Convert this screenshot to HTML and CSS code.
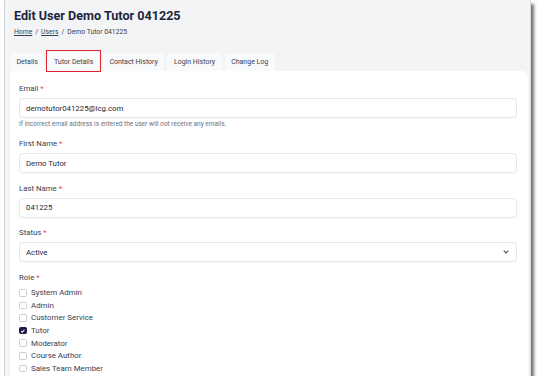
FILE: index.html
```html
<!DOCTYPE html>
<html>
<head>
<meta charset="utf-8">
<link rel="stylesheet" href="styles.css">
</head>
<body>
<div class="frame">
  <h1 class="title">Edit User Demo Tutor 041225</h1>
  <nav class="crumbs"><a href="#">Home</a><span class="sep">/</span><a href="#">Users</a><span class="sep">/</span><span>Demo Tutor 041225</span></nav>
  <div class="tabs">
    <div class="tab">Details</div>
    <div class="tab tab-hl">Tutor Details</div>
    <div class="tab">Contact History</div>
    <div class="tab">Login History</div>
    <div class="tab">Change Log</div>
  </div>
  <div class="card">
    <div class="field field-help">
      <div class="label">Email <span class="req">*</span></div>
      <div class="input">demotutor041225@lcg.com</div>
      <div class="help">If incorrect email address is entered the user will not receive any emails.</div>
    </div>
    <div class="field">
      <div class="label">First Name <span class="req">*</span></div>
      <div class="input">Demo Tutor</div>
    </div>
    <div class="field">
      <div class="label">Last Name <span class="req">*</span></div>
      <div class="input">041225</div>
    </div>
    <div class="field">
      <div class="label">Status <span class="req">*</span></div>
      <div class="input select"><span>Active</span>
        <svg class="chev" width="6" height="4" viewBox="0 0 6 4"><path d="M0.7 0.7 L3 3 L5.3 0.7" fill="none" stroke="#4b5563" stroke-width="1.1"/></svg>
      </div>
    </div>
    <div class="field">
      <div class="label">Role <span class="req">*</span></div>
      <div class="checks">
        <div class="check"><span class="cb"></span>System Admin</div>
        <div class="check"><span class="cb"></span>Admin</div>
        <div class="check"><span class="cb"></span>Customer Service</div>
        <div class="check"><span class="cb cb-on"><svg width="6" height="6" viewBox="0 0 6 6"><path d="M1.2 3.1 L2.5 4.3 L4.8 1.6" fill="none" stroke="#fff" stroke-width="1.1"/></svg></span>Tutor</div>
        <div class="check"><span class="cb"></span>Moderator</div>
        <div class="check"><span class="cb"></span>Course Author</div>
        <div class="check"><span class="cb"></span>Sales Team Member</div>
      </div>
    </div>
  </div>
</div>
</body>
</html>
```
FILE: styles.css
```css
html, body {
  margin: 0;
  padding: 0;
  background: #ffffff;
}
body {
  font-family: Roboto, "Liberation Sans", sans-serif;
}
.frame {
  margin-left: 4px;
  width: 527px;
  height: 376px;
  box-sizing: border-box;
  border-left: 1px solid #cfd1d4;
  border-right: 1px solid #d6d7d9;
  background: #f3f4f6;
  box-shadow: 3px 4px 3px rgba(0, 0, 0, 0.55);
  overflow: hidden;
  padding: 8px 2px 0 5px;
}
.title {
  margin: 0 0 0 4px;
  font-size: 12.6px;
  line-height: 16px;
  font-weight: 700;
  color: #1b2540;
}
.crumbs {
  margin: 4px 0 0 4px;
  font-size: 6.8px;
  line-height: 9px;
  color: #374151;
}
.crumbs a {
  color: #374151;
  text-decoration: underline;
}
.crumbs .sep {
  margin: 0 3px;
}
.tabs {
  display: flex;
  gap: 3px;
  margin-top: 16px;
}
.tab {
  position: relative;
  height: 18px;
  padding: 0 6.5px;
  display: flex;
  align-items: center;
  font-size: 7px;
  color: #374151;
  background: #f9fafb;
  border-radius: 4px 4px 0 0;
}
.tab-hl::after {
  content: "";
  position: absolute;
  top: -3px;
  bottom: -1px;
  left: -1.5px;
  right: -1.5px;
  border: 1.5px solid #e0242f;
}
.card {
  background: #ffffff;
  border-radius: 0 6px 0 0;
  padding: 11px 11px 0 9px;
  height: 320px;
}
.field {
  margin-bottom: 8.5px;
}
.field-help {
  margin-bottom: 8px;
}
.label {
  font-size: 7.8px;
  line-height: 12px;
  padding-top: 1px;
  margin-bottom: 3px;
  color: #374151;
}
.req {
  color: #ef4444;
}
.input {
  height: 20px;
  box-sizing: border-box;
  border: 1px solid #e3e6ea;
  border-radius: 4px;
  padding: 0 6px;
  display: flex;
  align-items: center;
  font-size: 7.8px;
  color: #1f2937;
  background: #fff;
  box-shadow: 0 1px 1px rgba(0, 0, 0, 0.03);
}
.select {
  justify-content: space-between;
  padding-right: 7px;
}
.help {
  margin-top: 1px;
  font-size: 6.5px;
  line-height: 10px;
  color: #6b7280;
}
.checks {
  display: flex;
  flex-direction: column;
}
.check {
  height: 12.6px;
  display: flex;
  align-items: center;
  gap: 4.5px;
  font-size: 7.9px;
  color: #374151;
}
.cb {
  width: 7.5px;
  height: 7.5px;
  box-sizing: border-box;
  border: 1px solid #c9ced6;
  border-radius: 1.5px;
  display: flex;
  align-items: center;
  justify-content: center;
}
.cb-on {
  background: #1e1b4b;
  border-color: #1e1b4b;
}
```
